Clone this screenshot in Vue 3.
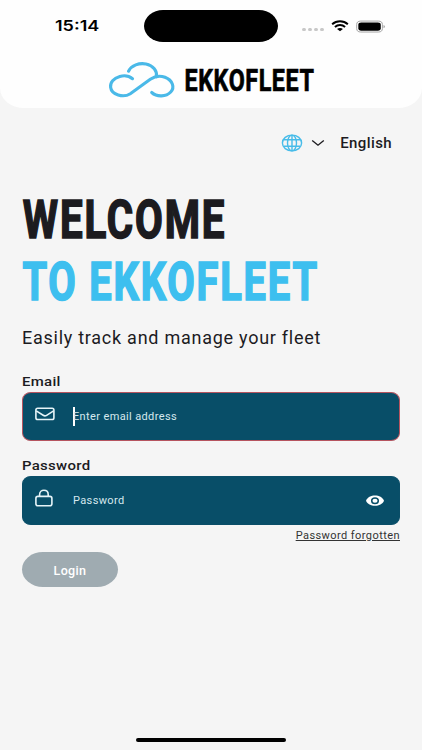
<template>
  <div class="screen">
    <header class="header">
      <div class="status-bar">
        <span class="time"><span class="wide">15:14</span></span>
        <div class="island"></div>
        <div class="status-icons">
          <div class="dots"><i v-for="n in 4" :key="n"></i></div>
          <svg class="wifi" width="18" height="12" viewBox="0 0 19 13">
            <path d="M1 4.6C5.8.2 13.2.2 18 4.6" />
            <path d="M4 7.5c3.100-2.800 7.900-2.800 11 0" />
            <path class="solid" d="M6.300 9.700c1.800-1.500 4.600-1.500 6.400 0L9.500 12.300z" />
          </svg>
          <svg class="battery" width="30" height="13" viewBox="0 0 31 13">
            <rect x=".7" y=".9" width="26.600" height="11.300" rx="4.200" ry="3.600" />
            <rect class="level" x="2.400" y="2.300" width="23.200" height="8.500" rx="3" ry="2.500" />
            <path class="level tip" d="M28.500 4.900c1.800.5 1.800 2.800 0 3.300z" />
          </svg>
        </div>
      </div>
      <div class="brand">
        <svg width="66" height="36" viewBox="0 0 66 36">
          <path
            d="M23.500 16.700C19.800 13.700 15 13.300 10.800 14.500C4.500 16.300 1 20.700 1.600 25.300C2.500 32.800 14.300 36.200 21.300 31.700L41.300 17.300C45.200 14.600 50.600 13.200 56 15.300C63.500 18.200 66.100 25.200 61.700 30C57.200 34.800 48 35.400 42.700 30.500M19.500 9.200C22.500 3.500 30 .6 37 2C44 3.400 48.700 9 47.300 14.800"
          />
        </svg>
        <svg class="brand-name" width="132" height="36" viewBox="0 0 132 36">
          <text x="-.5" y="28.700" textLength="130" lengthAdjust="spacingAndGlyphs">EKKOFLEET</text>
        </svg>
      </div>
    </header>

    <main class="content">
      <div class="language">
        <svg class="globe" width="22" height="18" viewBox="0 0 22 18">
          <ellipse cx="11" cy="9" rx="9.600" ry="7.900" />
          <ellipse cx="11" cy="9" rx="4.500" ry="7.900" />
          <path d="M11 1v16M2.800 5.700h16.400M2.800 12.300h16.400" />
        </svg>
        <svg class="chevron" width="14" height="8" viewBox="0 0 14 8">
          <path d="M1.200 1.500L7 6.200l5.800-4.700" />
        </svg>
        <span class="language-name">{{ language }}</span>
      </div>

      <h1 class="title">
        <svg width="378" height="62" viewBox="0 0 378 62">
          <text x=".8" y="49.300" textLength="203.500" lengthAdjust="spacingAndGlyphs">WELCOME</text>
        </svg>
        <svg class="accent" width="378" height="62" viewBox="0 0 378 62">
          <text x=".4" y="48.800" textLength="296.500" lengthAdjust="spacingAndGlyphs">TO EKKOFLEET</text>
        </svg>
      </h1>
      <p class="subtitle">Easily track and manage your fleet</p>

      <form class="form" @submit.prevent>
        <label class="label" for="email"><span class="wide">Email</span></label>
        <div class="field invalid">
          <svg class="field-icon" width="20" height="14" viewBox="0 0 20 14">
            <rect x=".9" y="1.200" width="18" height="11.300" rx="1.800" />
            <path d="M1.200 3.900l7 4.400c1.100.7 2.300.7 3.400 0l7-4.400" />
          </svg>
          <span class="caret"></span>
          <input id="email" v-model="email" type="email" placeholder="Enter email address" />
        </div>

        <label class="label second" for="password"><span class="wide">Password</span></label>
        <div class="field">
          <svg class="field-icon lock" width="18" height="18" viewBox="0 0 18 18">
            <rect x=".9" y="7.400" width="16" height="9.300" rx="2" />
            <path d="M4.600 7.400V5.500C4.600-.2 13.200-.2 13.200 5.500V7.400" />
          </svg>
          <input
            id="password"
            v-model="password"
            :type="showPassword ? 'text' : 'password'"
            placeholder="Password"
          />
          <button class="eye" type="button" @click="showPassword = !showPassword">
            <svg width="18" height="12" viewBox="0 0 18 12">
              <path d="M0 5.700C1.400 2.500 5 .6 9 .6s7.600 1.900 9 5.100c-1.400 3.200-5 5.100-9 5.100S1.400 8.900 0 5.700z" />
              <ellipse cx="9" cy="5.700" rx="3.300" ry="2.800" />
            </svg>
          </button>
        </div>
        <a class="forgot" href="#" @click.prevent>Password forgotten</a>
        <button class="login" type="submit">Login</button>
      </form>
    </main>

    <div class="home-bar"></div>
  </div>
</template>

<script setup>
import { ref } from 'vue'

const language = ref('English')
const email = ref('')
const password = ref('')
const showPassword = ref(false)
</script>

<style>
body {
  background: #f5f5f5;
}
</style>

<style scoped>
* {
  box-sizing: border-box;
}

.screen {
  display: flex;
  flex-direction: column;
  width: 100%;
  height: 100vh;
  overflow: hidden;
  background: #f5f5f5;
  color: #1c1b1f;
  font-family: Roboto, sans-serif;
}
svg {
  display: block;
  flex: none;
  fill: none;
  overflow: visible;
}

/* header */
.header {
  flex: none;
  height: 108px;
  background: #fefefe;
  border-radius: 0 0 24px 24px / 0 0 20px 20px;
}
.status-bar {
  display: flex;
  align-items: center;
  height: 52px;
}
.time {
  width: 144px;
  padding-left: 54.500px;
  color: #000;
  font: 600 15px/20px Inter, sans-serif;
}
.wide {
  display: inline-block;
  transform: scaleX(1.15);
  transform-origin: left center;
}
.time .wide {
  transform: scaleX(1.2);
}
.island {
  width: 134px;
  height: 32px;
  border-radius: 19px / 16px;
  background: #000;
}
.status-icons {
  display: flex;
  align-items: center;
  margin-left: 24px;
}
.dots {
  display: flex;
  gap: 2px;
  margin: 7px 7px 0 0;
}
.dots i {
  width: 4px;
  height: 3px;
  border-radius: 1.5px;
  background: #c8c8c8;
}
.wifi {
  margin-right: 7px;
  stroke: #000;
  stroke-width: 2.1;
}
.wifi .solid {
  fill: #000;
  stroke: none;
}
.battery {
  stroke: #a3a3a3;
  stroke-width: 1;
}
.battery .level {
  fill: #000;
  stroke: none;
}
.battery .tip {
  fill: #999;
}
.brand {
  display: flex;
  gap: 10px;
  padding: 10px 0 0 108.500px;
  stroke: #4ab9e8;
  stroke-width: 3.1;
  stroke-linecap: round;
}
.brand-name {
  fill: #000;
  stroke: #000;
  stroke-width: 0.7;
  stroke-linecap: butt;
  font-size: 31px;
  font-weight: 700;
  letter-spacing: 0.8px;
}

/* content */
.content {
  flex: 1;
  padding: 24px 22px 0;
}
.language {
  display: flex;
  align-items: center;
  justify-content: flex-end;
  height: 22px;
  padding-right: 8px;
}
.globe {
  stroke: #48bce9;
  stroke-width: 1.4;
}
.chevron {
  margin: 0 15px 0 8px;
  stroke: #1c1b1f;
  stroke-width: 1.4;
}
.language-name {
  font-size: 15px;
  font-weight: 500;
  letter-spacing: 0.4px;
}
.title {
  margin: 35px 0 0;
  font-size: 54.500px;
  font-weight: 700;
  letter-spacing: 2.5px;
}
.title svg {
  fill: #1c1b1f;
  stroke: #1c1b1f;
  stroke-width: 1.7;
}
.title .accent {
  fill: #3dbfef;
  stroke: #3dbfef;
}
.subtitle {
  margin: 12px 0 0;
  font-size: 18px;
  line-height: 26px;
  letter-spacing: 0.74px;
  white-space: nowrap;
}

/* form */
.form {
  display: flex;
  flex-direction: column;
  margin-top: 22px;
}
.label {
  height: 19px;
  font-size: 13px;
  font-weight: 500;
  line-height: 18px;
  letter-spacing: 0.25px;
}
.label.second {
  margin-top: 16px;
}
.field {
  display: flex;
  align-items: center;
  height: 49px;
  padding: 0 15.500px 0 11.500px;
  border: 1px solid #0a4e68;
  border-radius: 9px / 8px;
  background: #084e68;
}
.field.invalid {
  border-color: #b6545f;
}
.field-icon {
  width: 20px;
  margin: 0 18.500px 5px 0;
  stroke: #e6f4f8;
  stroke-width: 1.6;
}
.field-icon.lock {
  width: 18px;
  margin-right: 20.500px;
}
.caret {
  width: 2px;
  height: 19px;
  margin-right: -2px;
  background: #fff;
}
.field input {
  flex: 1;
  min-width: 0;
  padding: 1px 0 0;
  border: none;
  outline: none;
  background: transparent;
  color: #fff;
  font: 400 11px/16px Roboto, sans-serif;
  letter-spacing: 0.37px;
}
.field input::placeholder {
  color: #d5e8ee;
  opacity: 1;
}
.eye {
  padding: 0;
  border: none;
  background: none;
}
.eye path {
  fill: #fff;
}
.eye ellipse {
  stroke: #084e68;
  stroke-width: 1.5;
}
.forgot {
  align-self: flex-end;
  margin-top: 3px;
  color: #333;
  font-size: 11px;
  line-height: 15px;
  letter-spacing: 0.43px;
}
.login {
  width: 96px;
  height: 35px;
  margin-top: 9px;
  padding: 2px 0 0;
  border: none;
  border-radius: 21px / 17.5px;
  background: #9fabb1;
  color: #fff;
  font: 500 12.500px/18px Roboto, sans-serif;
  letter-spacing: 0.35px;
}
.home-bar {
  flex: none;
  align-self: center;
  width: 150px;
  height: 4px;
  margin-bottom: 8px;
  border-radius: 2px;
  background: #000;
}
</style>
